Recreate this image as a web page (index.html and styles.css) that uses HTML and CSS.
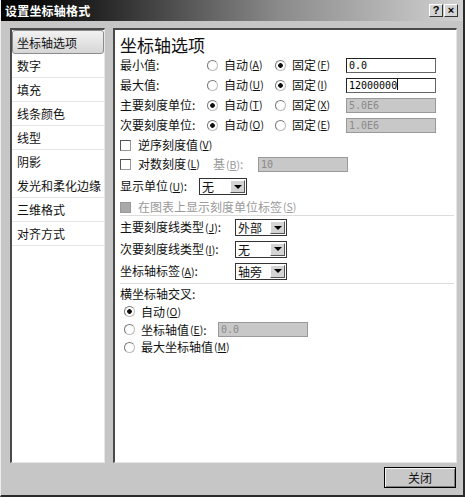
FILE: index.html
```html
<!DOCTYPE html>
<html lang="zh-CN">
<head>
    <meta charset="UTF-8">
    <title>设置坐标轴格式</title>
    <link rel="stylesheet" href="styles.css">
</head>
<body>
    <div class="dialog">
        <div class="titlebar">
            <span class="title">设置坐标轴格式</span>
            <span class="tbtns"><span class="tbtn">?</span><span class="tbtn">×</span></span>
        </div>

        <div class="main">
            <ul class="nav">
                <li class="active">坐标轴选项</li>
                <li>数字</li>
                <li>填充</li>
                <li>线条颜色</li>
                <li>线型</li>
                <li class="nosep">阴影</li>
                <li>发光和柔化边缘</li>
                <li>三维格式</li>
                <li>对齐方式</li>
            </ul>

            <div class="pane">
                <h2>坐标轴选项</h2>

                <div class="grid">
                    <span>最小值:</span>
                    <span class="opt"><i class="radio"></i>自动<span class="key">(<u>A</u>)</span></span>
                    <span class="opt"><i class="radio on"></i>固定<span class="key">(<u>F</u>)</span></span>
                    <span class="field">0.0</span>

                    <span>最大值:</span>
                    <span class="opt"><i class="radio"></i>自动<span class="key">(<u>U</u>)</span></span>
                    <span class="opt"><i class="radio on"></i>固定<span class="key">(<u>I</u>)</span></span>
                    <span class="field">12000000<span class="caret"></span></span>

                    <span>主要刻度单位:</span>
                    <span class="opt"><i class="radio on"></i>自动<span class="key">(<u>T</u>)</span></span>
                    <span class="opt"><i class="radio"></i>固定<span class="key">(<u>X</u>)</span></span>
                    <span class="field off">5.0E6</span>

                    <span>次要刻度单位:</span>
                    <span class="opt"><i class="radio on"></i>自动<span class="key">(<u>O</u>)</span></span>
                    <span class="opt"><i class="radio"></i>固定<span class="key">(<u>E</u>)</span></span>
                    <span class="field off">1.0E6</span>
                </div>

                <div class="row">
                    <i class="check"></i>逆序刻度值<span class="key">(<u>V</u>)</span>
                </div>
                <div class="row r18">
                    <span class="w-log"><i class="check"></i>对数刻度<span class="key">(<u>L</u>)</span></span>
                    <span class="w-base muted">基<span class="key">(<u>B</u>)</span>:</span>
                    <span class="field off">10</span>
                </div>
                <div class="row r27">
                    <span class="w-unit">显示单位<span class="key">(<u>U</u>)</span>:</span>
                    <span class="combo small"><span class="val">无</span><span class="arrow"></span></span>
                </div>
                <div class="row r14 muted">
                    <i class="check off"></i>在图表上显示刻度单位标签<span class="key">(<u>S</u>)</span>
                </div>

                <div class="rule"></div>

                <div class="row r21">
                    <span class="w-tick">主要刻度线类型<span class="key">(<u>J</u>)</span>:</span>
                    <span class="combo"><span class="val">外部</span><span class="arrow"></span></span>
                </div>
                <div class="row r22">
                    <span class="w-tick">次要刻度线类型<span class="key">(<u>I</u>)</span>:</span>
                    <span class="combo"><span class="val">无</span><span class="arrow"></span></span>
                </div>
                <div class="row r22">
                    <span class="w-tick">坐标轴标签<span class="key">(<u>A</u>)</span>:</span>
                    <span class="combo"><span class="val">轴旁</span><span class="arrow"></span></span>
                </div>

                <div class="rule tight"></div>

                <div class="row r17">横坐标轴交叉:</div>
                <div class="row r19 indent">
                    <i class="radio on"></i>自动<span class="key">(<u>O</u>)</span>
                </div>
                <div class="row r17 indent">
                    <span class="w-cross"><i class="radio"></i>坐标轴值<span class="key">(<u>E</u>)</span>:</span>
                    <span class="field off">0.0</span>
                </div>
                <div class="row r18 indent">
                    <i class="radio"></i>最大坐标轴值<span class="key">(<u>M</u>)</span>
                </div>
            </div>
        </div>

        <div class="footer">
            <span class="btn">关闭</span>
        </div>
    </div>
</body>
</html>
```

FILE: styles.css
```css
body {
    margin: 0;
    font-family: "Noto Sans CJK SC", "Noto Sans", sans-serif;
    font-size: 12px;
    color: #111;
    background: #c6c6c6;
}
.dialog {
    width: 465px;
    height: 497px;
    box-sizing: border-box;
    display: flex;
    flex-direction: column;
    background: #c6c6c6;
    border-left: 1px solid #ececec;
    border-right: 2px solid #2a2a2a;
    border-bottom: 2px solid #2a2a2a;
}

/* title bar */
.titlebar {
    height: 21px;
    flex: none;
    display: flex;
    align-items: center;
    justify-content: space-between;
    padding: 0 5px 0 4px;
    background: linear-gradient(90deg, #000 0%, #222 20%, #8a8a8a 60%, #d2d2d2 100%);
}
.title {
    color: #fff;
    font-weight: bold;
    font-size: 12px;
    letter-spacing: 0.2px;
}
.tbtns {
    display: flex;
    gap: 1px;
}
.tbtn {
    width: 14px;
    height: 13px;
    box-sizing: border-box;
    background: #d4d4d4;
    border: 1px solid;
    border-color: #fff #333 #333 #fff;
    font: bold 11px/11px "Liberation Sans", sans-serif;
    text-align: center;
    color: #000;
}

/* panels */
.main {
    display: flex;
    gap: 8px;
    padding: 7px 6px 0 9px;
    height: 435px;
    flex: none;
}
.nav,
.pane {
    box-sizing: border-box;
    height: 435px;
    background: #fff;
    border-top: 2px solid #4a4a4a;
    border-left: 2px solid #4a4a4a;
    border-right: 1px solid #e6e6e6;
    border-bottom: 1px solid #e6e6e6;
}
.nav {
    width: 95px;
    margin: 0;
    padding: 0;
    list-style: none;
}
.nav li {
    height: 24px;
    box-sizing: border-box;
    line-height: 23px;
    padding-left: 5px;
    border-bottom: 1px solid #e6e6e6;
    white-space: nowrap;
}
.nav li.nosep {
    border-bottom-color: #fff;
}
.nav li.active {
    border: 1px solid #8c8c8c;
    border-radius: 3px;
    padding-left: 4px;
    background: linear-gradient(#f2f2f2, #d6d6d6);
}
.pane {
    flex: 1;
    padding: 5px 0 0 5px;
}
.pane h2 {
    margin: 0;
    font-size: 17px;
    font-weight: normal;
    line-height: 20px;
}

/* controls */
.grid {
    display: grid;
    grid-template-columns: 85px 68px 73px 90px;
    grid-auto-rows: 20px;
    align-items: center;
    line-height: 14px;
}
.opt {
    display: flex;
    align-items: center;
}
.key {
    font-size: 10.5px;
    margin-left: 1px;
}
.radio {
    display: inline-block;
    flex: none;
    width: 11px;
    height: 11px;
    box-sizing: border-box;
    border-radius: 50%;
    border: 1px solid #777;
    border-right-color: #bbb;
    border-bottom-color: #bbb;
    background: #fff;
    margin: 0 6px 0 2px;
}
.radio.on {
    background: radial-gradient(circle, #111 0 2px, #fff 2.6px);
}
.check {
    display: inline-block;
    flex: none;
    width: 11px;
    height: 11px;
    box-sizing: border-box;
    border: 1px solid #555;
    border-right-color: #999;
    border-bottom-color: #999;
    background: #fff;
    margin-right: 7px;
}
.check.off {
    background: #a9a9a9;
    border-color: #999;
}
.field {
    display: block;
    height: 15px;
    box-sizing: border-box;
    border: 1px solid #666;
    border-top-color: #222;
    border-left-color: #222;
    padding-left: 2px;
    background: #fff;
    font: 10px/13px "DejaVu Sans Mono", monospace;
    color: #000;
}
.row .field {
    width: 90px;
}
.field.off {
    background: #c8c8c8;
    color: #8a8a8a;
    border-color: #999;
}
.caret {
    display: inline-block;
    width: 1px;
    height: 11px;
    background: #000;
    vertical-align: -1px;
}
.row {
    display: flex;
    align-items: center;
    height: 20px;
    line-height: 14px;
    white-space: nowrap;
}
.r14 { height: 14px; }
.r17 { height: 17px; }
.r18 { height: 18px; }
.r19 { height: 19px; }
.r21 { height: 21px; }
.r22 { height: 22px; }
.r27 { height: 27px; }
.indent {
    padding-left: 2px;
}
.muted {
    color: #9a9a9a;
}
.w-log { width: 93px; display: flex; align-items: center; }
.w-base { width: 45px; }
.w-unit { width: 79px; }
.w-tick { width: 115px; }
.w-cross { width: 96px; display: flex; align-items: center; }

.combo {
    display: inline-flex;
    width: 52px;
    height: 17px;
    box-sizing: border-box;
    border: 1px solid #333;
    background: #fff;
}
.combo.small {
    width: 48px;
}
.combo .val {
    flex: 1;
    line-height: 15px;
    padding-left: 2px;
}
.combo .arrow {
    width: 15px;
    margin: 1px;
    box-sizing: border-box;
    background: #d4d4d4;
    border: 1px solid;
    border-color: #fff #555 #555 #fff;
    display: flex;
    align-items: center;
    justify-content: center;
}
.combo .arrow::after {
    content: "";
    border-left: 4px solid transparent;
    border-right: 4px solid transparent;
    border-top: 4px solid #000;
}
.rule {
    height: 1px;
    background: #dcdcdc;
    margin: 1px 2px 3px 0;
}
.rule.tight {
    margin-bottom: 1px;
}
.row.r21 {
    margin-top: -2px;
}

/* footer */
.footer {
    flex: 1;
    display: flex;
    justify-content: flex-end;
    align-items: flex-start;
    padding: 4px 7px 0 0;
}
.btn {
    width: 72px;
    height: 21px;
    box-sizing: border-box;
    border: 1px solid #000;
    box-shadow: inset 1px 1px #f4f4f4, inset -1px -1px #808080;
    background: #c8c8c8;
    text-align: center;
    line-height: 19px;
}
```
